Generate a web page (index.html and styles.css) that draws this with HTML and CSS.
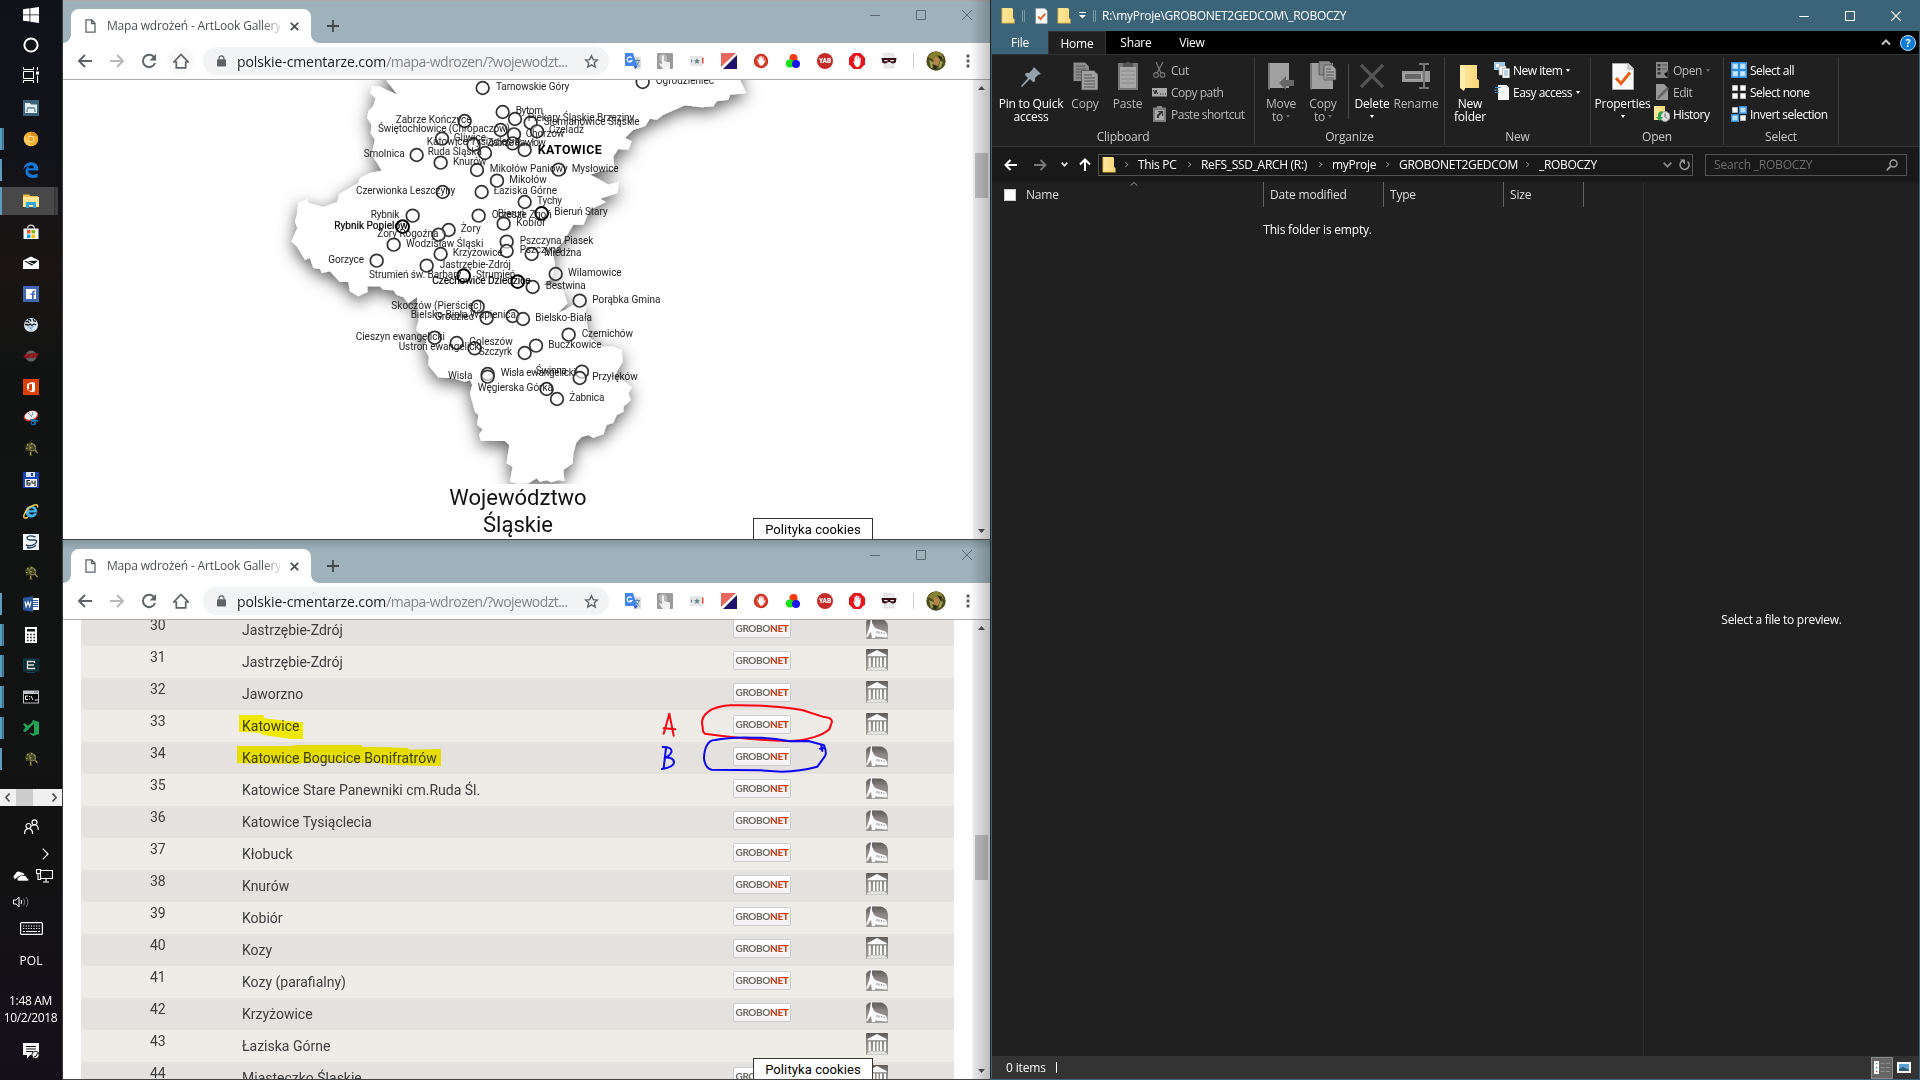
FILE: index.html
```html
<!DOCTYPE html>
<html lang="pl">
<head>
<meta charset="utf-8">
<title>Desktop</title>
<link rel="stylesheet" href="styles.css">
</head>
<body>
<svg class="defs" aria-hidden="true">
  <defs>
    <linearGradient id="gBank" x1="0" y1="0" x2="0" y2="1"><stop offset="0" stop-color="#5e5a57"/><stop offset=".4" stop-color="#8a8784"/><stop offset="1" stop-color="#a5a19c"/></linearGradient>
    <linearGradient id="gFolder" x1="0" y1="0" x2="1" y2="0"><stop offset="0" stop-color="#ffe9a2"/><stop offset="1" stop-color="#f8d775"/></linearGradient>
    <radialGradient id="gRed"><stop offset="0" stop-color="#f7b2a0"/><stop offset=".6" stop-color="#e04a32"/><stop offset="1" stop-color="#c8201a"/></radialGradient>

    <symbol id="back" viewBox="0 0 16 16"><path d="M15 8H2M8 2 2 8l6 6" fill="none" stroke="currentColor" stroke-width="2"/></symbol>
    <symbol id="reload" viewBox="0 0 16 16"><path d="M13.4 4.6A6.2 6.2 0 1 0 14 10" fill="none" stroke="currentColor" stroke-width="2"/><path d="M15 1v6.5H8.500z" fill="currentColor"/></symbol>
    <symbol id="home" viewBox="0 0 16 16"><path d="M.8 9 8 1.500 15.200 9H12.700v5.800H3.300V9z" fill="none" stroke="currentColor" stroke-width="1.700"/></symbol>
    <symbol id="lock" viewBox="0 0 10 13"><rect y="4.500" width="10" height="8" rx="1" fill="currentColor"/><path d="M2.300 5V3.300a2.700 2.500 0 0 1 5.400 0V5" fill="none" stroke="currentColor" stroke-width="1.300"/></symbol>
    <symbol id="star" viewBox="0 0 16 16"><path d="m8 1.800 1.900 4.200 4.500.4-3.400 3 1 4.500L8 11.500l-4 2.400 1-4.500-3.400-3 4.500-.4z" fill="none" stroke="currentColor" stroke-width="1.500"/></symbol>
    <symbol id="page" viewBox="0 0 11 14"><path d="M1 .8h5.800L10 4.200v9H1zM6.500.8v3.700H10" fill="none" stroke="currentColor" stroke-width="1.300"/></symbol>

    <symbol id="xTranslate" viewBox="0 0 16 16"><path d="M6 4h10v12H9z" fill="#dcdcdc"/><path d="M9 7.500h6M12 6v1.500M14 8q-1 4-4 5M10.500 8q1 3 4 5" stroke="#5f86a8" fill="none"/><path d="M0 0h8l4 13H1q-1 0-1-1z" fill="#4285f4"/><path d="M9 13h4l-3 3z" fill="#2a57c4"/><path d="M6.800 5A2.500 2.500 0 1 0 7 7.500H4.800" stroke="#fff" fill="none" stroke-width="1.200"/></symbol>
    <symbol id="xTouch" viewBox="0 0 16 16"><rect width="16" height="16" rx="1" fill="#9b9b9b"/><circle cx="6" cy="5" r="4" fill="#b9b9b9"/><path d="M5 3q1-1.500 2 0v5l6 1.500V16H6l-4-5q0-1.500 3 0z" fill="#f1f1f1"/></symbol>
    <symbol id="xStars" viewBox="0 0 16 16"><path d="M1 3h13v10H1z" fill="#e6e8e8"/><path d="m8 5 .9 2 2.100.2-1.600 1.400.5 2.200L8 9.700l-1.900 1.100.5-2.200L5 7.200 7.100 7zM2 6l1.500 2L2 10z" fill="#65848b"/><path d="M13 4.500h1.500v6H13z" fill="#ef4b43"/></symbol>
    <symbol id="xDiag" viewBox="0 0 16 16"><path d="M0 0h16v16H0z" fill="#fff"/><path d="M0 0h15L0 14z" fill="#ea675f"/><path d="M16 2v14H2z" fill="#20126b"/></symbol>
    <symbol id="xHand" viewBox="0 0 16 16"><circle cx="8" cy="8" r="7.200" fill="url(#gRed)"/><path d="M4.500 5.500 6 8V3.800h1V7l.5-4h1L9 7l.8-3.500.8.2L10.400 8.500 12 7l.6.700-3 4.800H7L4 6z" fill="#fff"/></symbol>
    <symbol id="xRgb" viewBox="0 0 16 16"><circle cx="8.500" cy="5" r="4" fill="#fb3813"/><circle cx="5" cy="10.500" r="4.100" fill="#12e312"/><circle cx="11" cy="11" r="4" fill="#1717e8"/></symbol>
    <symbol id="xYab" viewBox="0 0 16 16"><circle cx="8" cy="8" r="8" fill="#c62c27"/><text x="8" y="10.400" text-anchor="middle" font-family="Roboto" font-weight="900" font-size="6.500" fill="#fff">YAB</text></symbol>
    <symbol id="xStop" viewBox="0 0 16 16"><path d="M4.700 0h6.600L16 4.700v6.600L11.300 16H4.700L0 11.300V4.700z" fill="#e8141c"/><path d="M4 7.500 5.500 9V3.500h1.300V7l.3-4.500h1.300V7l.6-4h1.200v4.500l.6-2.800h1.100L11.500 10q-.5 3.500-2.500 4H7.500Q5.500 13 4 7.500z" fill="#fff"/></symbol>
    <symbol id="xMask" viewBox="0 0 16 16"><path d="M3 0h8l2 2v13H3z" fill="#e9e9e9" stroke="#c7c7c7" stroke-width=".5"/><path d="M.5 5h15l-.7 4.500q-3.800 2-5.800-.5H7q-2 2.500-5.800.5z" fill="#3b0e18"/><path d="M3 7h3.500v1.300H3.500zM9.500 7H13l-.5 1.300h-3z" fill="#fff"/></symbol>
    <symbol id="xAvatar" viewBox="0 0 20 20"><circle cx="10" cy="10" r="9.700" fill="#4d4a1e"/><path d="M2 6q6-8 13-4l3 6-6-2-4 3z" fill="#87822f"/><path d="M8 7q4-3 6 2l-2 6-5-2z" fill="#b5854c"/><path d="M3 9l4 2 1 5-3 1zM14 10l3 1-2 5-3 2z" fill="#9ba04f"/><path d="M11 4l5 2-1 3zM6 13l5 3-2 3z" fill="#26240f"/></symbol>

    <symbol id="bank" viewBox="0 0 22 22"><rect width="22" height="22" rx="1" fill="url(#gBank)"/><path d="M11 1 20.500 6v1.300H1.500V6zM2.500 8.500h2.300V18H2.500zM7 8.500h2V18H7zM10.600 8.500h1.900V18h-1.900zM14 8.500h2V18h-2zM18 8.500h2V18h-2zM2.500 18.500h17v1.300H2.500zM1 20.200h20V21.500H1z" fill="#fafafa"/></symbol>
    <symbol id="church" viewBox="0 0 22 22"><path d="M0 22V5q1-3 4-3.500h11q6 1.500 7 7.500v13z" fill="url(#gBank)"/><path d="M5 1h1v5l3 5 10.500 3.500q2 1 2 6L9 19.500V21H6l-1-6-3.500 5H0l3.500-10z" fill="#fafafa"/><path d="M11 14v2M13 14.500v2M15.500 15v1.500M18 15.500V17" stroke="#8b8885"/><path d="m1 21.500 3-5 1.500 5z" fill="#8f8c89"/></symbol>

    <symbol id="folder" viewBox="0 0 14 17"><path d="M1 1h10l1 1v9l1.500 1v4H1z" fill="url(#gFolder)"/><path d="M1 1v15h12.500" fill="none" stroke="#e3b744"/></symbol>
    <symbol id="chk" viewBox="0 0 13 17"><path d="M.5.500H10L12.500 3v13.500H.5z" fill="#fafafa" stroke="#bbb" stroke-width=".6"/><path d="m3 9 2.500 2.800L10.500 6" fill="none" stroke="#e8581b" stroke-width="1.800"/></symbol>

    <symbol id="tree" viewBox="0 0 16 16"><path d="M4 2.500 8 1l3 1.500 2 3.500-1 4-3 .5L9 14l1.500 1H6l1-1.500-.5-3.500L3 10 2 6z" fill="#45471f"/><path d="M4 3h1.500v1.500H4zM8 2h1.500v1H8zM7 6h1.500v1.500H7zM3 7h1.500v1H3zM11 4h1v1.500h-1zM7 11h1v3H7z" fill="#a4a254"/><circle cx="9.500" cy="6.500" r="3.300" fill="none" stroke="#7d8270" stroke-width=".9"/><path d="m12 9 2.500 3" stroke="#a8903a" stroke-width="1.200"/></symbol>
  </defs>
</svg>

<div class="desktop">
  <nav class="taskbar">
    <div class="sys"><svg width="16" height="16" viewBox="0 0 16 16"><path d="M0 2.200 6.500 1.300v6.200H0zM7.300 1.200 16 0v7.500H7.300zM0 8.300h6.500v6.300L0 13.700zM7.300 8.300H16v7.600l-8.700-1.200z" fill="#fff"/></svg></div>
    <div class="sys"><svg width="16" height="16" viewBox="0 0 16 16"><circle cx="8" cy="8" r="6.600" fill="none" stroke="#fff" stroke-width="2"/></svg></div>
    <div class="sys"><svg width="16" height="16" viewBox="0 0 16 16"><path d="M.5 4.500h10v7H.5zM.5 0v2.500h10V0M.5 16v-2.500h10V16M14.500 0v3M14.500 8.500V16" fill="none" stroke="#fff"/><path d="M13 4.500h3v3h-3z" fill="#fff"/></svg></div>
    <div class="apps">
      <div class="app"><svg width="16" height="16" viewBox="0 0 16 16"><path d="M0 0h16v16H0z" fill="#386278"/><path d="M2 3h5l1 1.500h6V13H2z" fill="#e4edf0"/><path d="M4 7h8l1 5H3z" fill="#7c9dab"/><path d="M5 9h6v3H5z" fill="#e4edf0"/></svg></div>
      <div class="app run many"><svg width="16" height="16" viewBox="0 0 16 16"><circle cx="8" cy="8" r="7.300" fill="#f3b02b"/><path d="M8 .7A7.300 7.300 0 0 1 14.600 5H8z" fill="#d88a1b"/><path d="M1.500 5 5 9.500 8 15A7.300 7.300 0 0 1 1.500 5z" fill="#fbc95d"/><circle cx="8" cy="8" r="3.300" fill="#fff0c8"/><circle cx="8" cy="8" r="2.500" fill="#eca32a"/></svg></div>
      <div class="app run"><svg width="16" height="16" viewBox="0 0 16 16"><path d="M.5 7.500C1 3 4 .3 8.200.3c5 0 7.400 3.500 7.300 8.200H5.300c.2 3.200 2.700 4.300 5 4.300 1.800 0 3.300-.5 4.400-1.200v3.300c-1.400.7-3.100 1.100-5 1.100-4.600 0-7.200-3-7.200-6.500 0-2.800 1.700-4.800 3.800-5.700C3.500 4.200 1.800 5.300.5 7.500zM5.400 6.200h5.500c0-2-1-3-2.600-3S5.600 4.300 5.400 6.200z" fill="#1377d6"/></svg></div>
      <div class="app run active"><svg width="16" height="16" viewBox="0 0 16 16"><path d="M0 1.500h6L7.500 3H15v3H0z" fill="#f0c04e"/><path d="M0 4h16v10H0z" fill="#ffe594"/><path d="M3 15V9h10v6h-3v-3H6v3z" fill="#35a5df"/></svg></div>
      <div class="app"><svg width="16" height="16" viewBox="0 0 16 16"><path d="M.5 4.500h15V15h-15z" fill="#fff"/><path d="M4.500 4.500C5 0 11 0 11.500 4.500" fill="none" stroke="#ddd" stroke-width="1.200"/><path d="M4 6h3.500v3.500H4z" fill="#f25022"/><path d="M8.500 6H12v3.500H8.500z" fill="#7fba00"/><path d="M4 10.500h3.500V14H4z" fill="#00a4ef"/><path d="M8.500 10.500H12V14H8.500z" fill="#ffb900"/></svg></div>
      <div class="app"><svg width="16" height="16" viewBox="0 0 16 16"><path d="M0 5.500 8 1.500l8 4V14H0z" fill="#fff"/><path d="m1 6 14-.2-6 5z" fill="#111"/><path d="m3 5.500 9 4.500" stroke="#fff"/></svg></div>
      <div class="app"><svg width="16" height="16" viewBox="0 0 16 16"><path d="M0 0h16v16H0z" fill="#4267b2"/><path d="M3 3h10v10H3z" fill="#fff"/><path d="M9 13V9H7.500V7.500H9C9 5 10 4.500 12 4.500V6c-1.200 0-1.300.3-1.300 1.500H12L11.800 9h-1.100v4z" fill="#4267b2"/></svg></div>
      <div class="app"><svg width="16" height="16" viewBox="0 0 16 16"><circle cx="8" cy="8" r="7" fill="#dbe6ee"/><path d="M2.500 4.500h2.500l1 1.500M5 2.500h2l1 2M10 2l1 2 2 .5M2 7.500h2l1 1 2-1.500 2 1.500 2-1.500 2 1" fill="none" stroke="#10161c" stroke-width="1.300"/><path d="m5.500 9 2.500 3 2.500-3M8 10v5" stroke="#8fb0ca" fill="none" stroke-width="1.300"/></svg></div>
      <div class="app"><svg width="16" height="16" viewBox="0 0 16 16"><circle cx="8" cy="8" r="5.600" fill="#636363"/><path d="m0 9 3-3.500 3 .5 3-1 3 .5 4-.5-2 4-4 1-3-.5-3 1z" fill="#84141a"/><path d="m2 8.500 3-2M7 9l3-3M11 8.500l3-2" stroke="#b83a3a" stroke-width=".6"/></svg></div>
      <div class="app"><svg width="16" height="16" viewBox="0 0 16 16"><path d="M0 0h16v16H0z" fill="#dc3e00"/><path d="m4 5 5-2 3 .8v8.500l-3 .9-5-2 5 .5V4.800L6 5.500V10l-2 .8z" fill="#fff"/></svg></div>
      <div class="app"><svg width="16" height="16" viewBox="0 0 16 16"><ellipse cx="8" cy="6" rx="7.500" ry="5" transform="rotate(-20 8 6)" fill="#d83a35"/><ellipse cx="8" cy="5.300" rx="6.500" ry="4.100" transform="rotate(-20 8 5.300)" fill="#eef0f2"/><path d="m5 3 4 4M10 2 8.500 7" stroke="#8b949b"/><path d="m7.500 9.500 7.500 1.500M12 10v5" stroke="#1c7cc9" stroke-width="1.500"/><circle cx="10" cy="13" r="1.800" fill="none" stroke="#1c7cc9"/></svg></div>
      <div class="app"><svg width="16" height="16"><use href="#tree"/></svg></div>
      <div class="app"><svg width="16" height="16" viewBox="0 0 16 16"><path d="M0 0h16v16H0z" fill="#1842b8"/><path d="M3 0h9v5H3z" fill="#d4e2ee"/><path d="M8 1h2v3H8z" fill="#1842b8"/><path d="M2 7h12v8H2z" fill="#f4f4f4"/><path d="M7 8.500H4V13h3v-2H4M9 8.500V11h3M12 8.500V14" fill="none" stroke="#222" stroke-width="1.100"/></svg></div>
      <div class="app"><svg width="16" height="16" viewBox="0 0 16 16"><path d="M14.200 9.500H5.800c.3 2 4.300 2.900 5.200.8h3c-1 3-3.400 4.500-6 4.300-3.200-.2-5.500-2.700-5.400-6.100.1-3.300 2.500-5.800 5.700-5.800 3.700.1 6.200 2.700 5.900 6.800zM5.900 7.300h5c-.3-2.700-4.600-2.700-5 0z" fill="#46b2ea"/><path d="M14.500 4.500Q15.500.5 10 2.500 3.500 5 1 12q-1.200 4.500 4 2.200" fill="none" stroke="#f4c64a" stroke-width="1.500"/></svg></div>
      <div class="app"><svg width="16" height="16" viewBox="0 0 16 16"><path d="M0 0h16v16H0z" fill="#f3f6f9"/><path d="M12.500 3Q6 .5 4 3.500 4 6.500 10 6t2 4q-5 3-9 1M4 13.500q4 1.500 9-2" fill="none" stroke="#24425e" stroke-width="1.400"/></svg></div>
      <div class="app"><svg width="16" height="16"><use href="#tree"/></svg></div>
      <div class="app run"><svg width="16" height="16" viewBox="0 0 16 16"><path d="M9 2h7v12H9z" fill="#fff"/><path d="M10 4.500h5M10 6.500h5M10 8.500h5M10 10.500h5" stroke="#2a5699"/><path d="m0 2 10-2v16L0 14z" fill="#2a5699"/><path d="m2 5.500 1.200 5L5 6l1.700 4.500L8 5.300" fill="none" stroke="#fff" stroke-width="1.200"/></svg></div>
      <div class="app run many"><svg width="16" height="16" viewBox="0 0 16 16"><path d="M2 0h12v16H2z" fill="#fff"/><path d="M4 2h8v2.500H4z" fill="#111"/><path d="M4 7.500h8M4 10.500h8M4 13.500h8" stroke="#111" stroke-width="1.500" stroke-dasharray="1.500 1.700"/></svg></div>
      <div class="app run many"><svg width="16" height="16" viewBox="0 0 16 16"><rect y="1" width="16" height="12" rx="1" fill="#052b38" stroke="#1a5260" stroke-width=".7"/><path d="M11.500 9.500v1h-7v-7h7v1.500M5 7h6" fill="none" stroke="#e3dcd0" stroke-width="1.300"/><path d="M4 14.500h8" stroke="#124a55"/></svg></div>
      <div class="app run many"><svg width="16" height="16" viewBox="0 0 16 16"><path d="M0 1.500h16v13H0z" fill="#c3c3cb"/><path d="M1 5h14v8.500H1z" fill="#000"/><path d="M11 3h4" stroke="#555" stroke-dasharray="1 .5"/><path d="M5 7H2.500v3.500H5M6.500 7v1M6.500 9.500v1M8 7l2 4M12 11h3" fill="none" stroke="#fff"/></svg></div>
      <div class="app run many"><svg width="16" height="16" viewBox="0 0 16 16"><path d="m10 0 6 2v12l-6 2-4-3 5 .5V3.500L5 9.800 2 12l-2-1 2.500-3.500L0 4l2-.8 3 2.600 4-3.300z" fill="#23a455"/></svg></div>
      <div class="app run"><svg width="16" height="16"><use href="#tree"/></svg></div>
    </div>
    <div class="dockscroll">
      <svg width="5" height="9" viewBox="0 0 5 9"><path d="M4.500.5.8 4.500l3.700 4" fill="none" stroke="#505050" stroke-width="1.600"/></svg>
      <i></i>
      <svg width="5" height="9" viewBox="0 0 5 9"><path d="m.5.500 3.700 4-3.700 4" fill="none" stroke="#505050" stroke-width="1.600"/></svg>
    </div>
    <div class="tray">
      <div class="people"><svg width="15" height="15" viewBox="0 0 15 15"><g fill="none" stroke="#fff" stroke-width="1.200"><circle cx="10.500" cy="3.300" r="2.500"/><circle cx="4.500" cy="7" r="2.500"/><path d="M.6 15q0-5.300 4-5.300t4 5.300M7.500 7.200q3-3 5.500-.5 1.200 1.500 1.400 4"/></g></svg></div>
      <div class="more"><svg width="7" height="12" viewBox="0 0 7 12"><path d="m.7.700 5.300 5.300-5.300 5.300" fill="none" stroke="#fff" stroke-width="1.200"/></svg></div>
      <div class="net"><svg width="16" height="11" viewBox="0 0 16 11"><path d="M2 8Q-1 6 2 3.500 4-1 8 1.500q3-.5 3.500 2.500L6 5z" fill="#fff"/><path d="M5 10q-2.500-3 1-4 1.500-3 5-1.500 3 0 3 2.500 3 1 1 3z" fill="#fff" stroke="#111" stroke-width=".6"/></svg>
        <svg width="17" height="14" viewBox="0 0 17 14"><path d="M4.500 1.500h12v8h-12zM7 13h6M10 10v3M2 5v5.500h3M.5.500h4v4h-4z" fill="none" stroke="#fff" stroke-width="1.100"/></svg></div>
      <div class="vol"><svg width="17" height="12" viewBox="0 0 17 12"><path d="M.5 4h2.700L6 1v10L3.200 8H.5z" fill="none" stroke="#fff"/><path d="M8 4q1.500 2 0 4" fill="none" stroke="#fff"/><path d="M10.500 2.500q2.500 3.500 0 7M13 1q4 5 0 10" fill="none" stroke="#777"/></svg></div>
      <div class="kbd"><svg width="23" height="13" viewBox="0 0 23 13"><rect x=".6" y=".6" width="21.800" height="11.800" rx="1" fill="none" stroke="#fff" stroke-width="1.200"/><path d="M3 4h17M3 6.500h17" stroke="#fff" stroke-dasharray="1.200 1.400"/><path d="M3 9.500h2M6 9.500h11M18 9.500h2" stroke="#fff"/></svg></div>
      <div class="lang">POL</div>
      <div class="clock"><span>1:48 AM</span><span>10/2/2018</span></div>
      <div class="note"><svg width="17" height="17" viewBox="0 0 17 17"><path d="M0 0h16v12H7l-3 3.500V12H0z" fill="#fff"/><path d="M3 3.500h10M3 6h10M3 8.500h7" stroke="#111"/><circle cx="12.500" cy="12" r="3.700" fill="#fff" stroke="#111"/><path d="M11 14q3 0 3.500-4" stroke="#111" fill="none"/></svg></div>
    </div>
  </nav>

  <main class="browsers">
    <section class="window">
      <header class="titlebar">
        <div class="tab"><svg class="doc" width="11" height="14"><use href="#page"/></svg><span class="tabname">Mapa wdrożeń - ArtLook Gallery</span><svg width="9" height="9" viewBox="0 0 9 9"><path d="m.8.800 7.400 7.400M8.200.8.800 8.200" stroke="#494c50" stroke-width="1.700"/></svg></div>
        <svg class="plus" width="12" height="12" viewBox="0 0 12 12"><path d="M6 0v12M0 6h12" stroke="#3f4548" stroke-width="1.800"/></svg>
        <div class="winctl"><svg width="10" height="10" viewBox="0 0 10 10"><path d="M0 5.500h10" stroke="#5d6b71"/></svg><svg width="10" height="10" viewBox="0 0 10 10"><path d="M.5.500h9v9h-9z" fill="none" stroke="#5d6b71"/></svg><svg width="10" height="10" viewBox="0 0 10 10"><path d="m0 0 10 10M10 0 0 10" stroke="#5d6b71"/></svg></div>
      </header>
      <div class="toolbar">
        <div class="nav"><svg width="16" height="16"><use href="#back"/></svg><svg class="off flip" width="16" height="16"><use href="#back"/></svg><svg width="16" height="16"><use href="#reload"/></svg><span class="homebg"><svg width="16" height="16"><use href="#home"/></svg></span></div>
        <div class="omnibox"><svg width="9" height="12"><use href="#lock"/></svg><span class="url">polskie-cmentarze.com<em>/mapa-wdrozen/?wojewodzt...</em></span><svg width="15" height="15"><use href="#star"/></svg></div>
        <div class="ext"><svg><use href="#xTranslate"/></svg><svg><use href="#xTouch"/></svg><svg><use href="#xStars"/></svg><svg><use href="#xDiag"/></svg><svg><use href="#xHand"/></svg><svg><use href="#xRgb"/></svg><svg><use href="#xYab"/></svg><svg><use href="#xStop"/></svg><svg><use href="#xMask"/></svg></div>
        <i class="sep"></i>
        <svg class="avatar" width="20" height="20"><use href="#xAvatar"/></svg>
        <svg width="4" height="14" viewBox="0 0 4 14"><path d="M.6.600h2.800v2.800H.6zM.6 5.600h2.800v2.800H.6zM.6 10.600h2.800v2.800H.6z" fill="#56595d"/></svg>
      </div>
      <div class="view">
        <div class="page mappage">
          <svg class="map" width="910" height="404" viewBox="63 80 910 404">
            <defs><filter id="sh" x="-20%" y="-20%" width="140%" height="140%"><feDropShadow dx="0" dy="15" stdDeviation="24" flood-color="#000" flood-opacity=".62"/></filter></defs>
            <g transform="translate(280 78) scale(.33333)">
              <path filter="url(#sh)" fill="#fff" d="M320-60V8L353 50 325 38 300 26 275 25 272 45 287 60 280 85 265 100 262 120 275 140 272 165 285 185 275 230 295 260 305 278 270 285 240 300 235 315 178 348 172 372 130 387 85 375 83 364 55 375 50 415 45 430 52 450 35 490 50 505 75 545 90 540 100 570 120 572 125 585 150 580 180 612 205 612 210 640 235 655 262 642 262 625 300 625 310 635 340 637 350 650 370 658 385 675 411 657 413 700 416 726 408 756 440 786 430 806 447 836 445 861 475 898 520 901 555 911 570 906 577 921 570 946 585 1001 595 1011 592 1041 608 1054 597 1071 603 1088 675 1089 688 1101 680 1156 698 1166 690 1211 715 1218 745 1216 770 1201 780 1211 800 1207 815 1213 835 1206 853 1209 850 1176 878 1156 880 1126 888 1096 903 1078 925 1071 940 1079 970 1069 980 1041 1000 1034 1010 1011 1030 1001 1030 986 1052 966 1045 946 1055 928 1020 901 1003 906 1010 881 1028 851 1025 816 1000 806 965 806 930 781 922 746 915 681 880 681 855 696 835 704 862 675 850 640 815 620 790 622 815 600 825 560 818 522 850 490 880 440 910 440 930 395 977 372 960 362 1012 345 1017 311 985 320 950 300 930 290 960 280 1003 272 1000 235 1015 213 1045 215 1055 190 1035 180 1060 155 1095 145 1110 122 1130 125 1150 110 1215 82 1265 88 1300 85 1310 70 1345 65 1350 50 1398 45 1380 5V-60Z"/>
              <g class="rings">
                <circle cx="608" cy="30" r="19"/><circle cx="1088" cy="12" r="19"/><circle cx="668" cy="102" r="19"/><circle cx="705" cy="123" r="19"/><circle cx="752" cy="134" r="19"/><circle cx="771" cy="160" r="19"/><circle cx="554" cy="129" r="19"/><circle cx="662" cy="156" r="19"/><circle cx="702" cy="169" r="19"/><circle cx="486" cy="182" r="19"/><circle cx="581" cy="200" r="19"/><circle cx="698" cy="196" r="19"/><circle cx="734" cy="216" r="19"/><circle cx="410" cy="231" r="19"/><circle cx="615" cy="225" r="19"/><circle cx="482" cy="254" r="19"/><circle cx="591" cy="276" r="19"/><circle cx="836" cy="275" r="19"/><circle cx="651" cy="308" r="19"/><circle cx="488" cy="342" r="19"/><circle cx="605" cy="342" r="19"/><circle cx="734" cy="372" r="19"/><circle class="k" cx="785" cy="406" r="19"/><circle cx="398" cy="413" r="19"/><circle class="k" cx="368" cy="446" r="19"/><circle cx="596" cy="413" r="19"/><circle cx="671" cy="437" r="19"/><circle cx="506" cy="456" r="19"/><circle cx="476" cy="470" r="19"/><circle cx="341" cy="500" r="19"/><circle cx="680" cy="491" r="19"/><circle cx="680" cy="519" r="19"/><circle cx="482" cy="528" r="19"/><circle cx="755" cy="528" r="19"/><circle cx="290" cy="548" r="19"/><circle cx="440" cy="563" r="19"/><circle class="k" cx="551" cy="593" r="19"/><circle class="k" cx="713" cy="611" r="19"/><circle cx="758" cy="627" r="19"/><circle cx="827" cy="588" r="19"/><circle cx="899" cy="668" r="19"/><circle cx="593" cy="686" r="19"/><circle cx="620" cy="720" r="19"/><circle cx="698" cy="714" r="19"/><circle cx="729" cy="723" r="19"/><circle cx="866" cy="770" r="19"/><circle cx="464" cy="779" r="19"/><circle cx="530" cy="795" r="19"/><circle cx="584" cy="811" r="19"/><circle cx="768" cy="803" r="19"/><circle cx="734" cy="825" r="19"/><circle cx="623" cy="888" r="19"/><circle cx="623" cy="896" r="19"/><circle cx="906" cy="881" r="19"/><circle cx="899" cy="900" r="19"/><circle cx="800" cy="933" r="19"/><circle cx="831" cy="963" r="19"/>
              </g>
              <g class="labels">
                <text x="648" y="36" textLength="220">Tarnowskie Góry</text><text x="1127" y="18" textLength="175">Ogrodzieniec</text><text x="707" y="108" textLength="82">Bytom</text><text x="743" y="129" textLength="320">Piekary Śląskie Brzeziny</text><text x="791" y="141" textLength="288">Siemianowice Śląskie</text><text x="807" y="165" textLength="105">Czeladź</text><text x="347" y="135" textLength="228">Zabrze Kończyce</text><text x="294" y="162" textLength="396">Świętochłowice (Chropaczów)</text><text x="737" y="177" textLength="116">Chorzów</text><text x="521" y="188" textLength="97">Gliwice</text><text x="440" y="200" textLength="280">Katowice Tysiąclecia</text><text x="622" y="204" textLength="175">Zabrze Pawłów</text><text x="251" y="237" textLength="123">Smolnica</text><text x="443" y="231" textLength="163">Ruda Śląska</text><text x="519" y="261" textLength="100">Knurów</text><text x="629" y="282" textLength="234">Mikołów Paniowy</text><text x="875" y="282" textLength="141">Mysłowice</text><text x="688" y="314" textLength="112">Mikołów</text><text x="228" y="348" textLength="298">Czerwionka Leszczyny</text><text x="641" y="348" textLength="190">Łaziska Górne</text><text x="771" y="378" textLength="75">Tychy</text><text x="823" y="411" textLength="160">Bieruń Stary</text><text x="272" y="420" textLength="86">Rybnik</text><text x="635" y="420" textLength="180">Orzesze Zgoń</text><text x="653" y="417" textLength="82">Bieruń</text><text x="709" y="444" textLength="88">Kobiór</text><text class="h" x="163" y="453" textLength="220">Rybnik Popielów</text><text x="542" y="462" textLength="60">Żory</text><text x="292" y="477" textLength="183">Żory Rogoźna</text><text x="378" y="506" textLength="232">Wodzisław Śląski</text><text x="719" y="498" textLength="221">Pszczyna Piasek</text><text x="719" y="524" textLength="125">Pszczyna</text><text x="792" y="534" textLength="112">Miedźna</text><text x="518" y="534" textLength="150">Krzyżowice</text><text x="145" y="555" textLength="107">Gorzyce</text><text x="479" y="570" textLength="214">Jastrzębie-Zdrój</text><text x="267" y="600" textLength="277">Strumień św. Barbary</text><text x="588" y="600" textLength="118">Strumień</text><text class="h" x="457" y="617" textLength="295">Czechowice Dziedzice</text><text x="864" y="594" textLength="161">Wilamowice</text><text x="797" y="633" textLength="120">Bestwina</text><text x="937" y="675" textLength="204">Porąbka Gmina</text><text x="334" y="692" textLength="272">Skoczów (Pierściec)</text><text x="392" y="720" textLength="316">Bielsko-Biała Wapienica</text><text x="465" y="725" textLength="117">Grodziec</text><text x="766" y="729" textLength="170">Bielsko-Biała</text><text x="905" y="777" textLength="154">Czernichów</text><text x="227" y="786" textLength="268">Cieszyn ewangelicki</text><text x="568" y="801" textLength="130">Goleszów</text><text x="356" y="816" textLength="250">Ustroń ewangelicki</text><text x="805" y="810" textLength="160">Buczkowice</text><text x="596" y="832" textLength="100">Szczyrk</text><text x="504" y="903" textLength="73">Wisła</text><text x="662" y="893" textLength="226">Wisła ewangelicki</text><text x="767" y="887" textLength="94">Świnna</text><text x="937" y="906" textLength="136">Przyłęków</text><text x="593" y="939" textLength="226">Węgierska Górka</text><text x="868" y="969" textLength="105">Żabnica</text>
                <text class="cap" x="773" y="227" textLength="192">KATOWICE</text>
              </g>
            </g>
          </svg>
          <h1>Województwo<br>Śląskie</h1>
          <div class="cookies">Polityka cookies</div>
        </div>
        <div class="vscroll"><svg width="7" height="4" viewBox="0 0 7 4"><path d="M0 4 3.500 0 7 4z" fill="#505050"/></svg><i class="thumb t1"></i><svg class="dn" width="7" height="4" viewBox="0 0 7 4"><path d="M0 0 3.500 4 7 0z" fill="#505050"/></svg></div>
      </div>
    </section>

    <section class="window second">
      <header class="titlebar">
        <div class="tab"><svg class="doc" width="11" height="14"><use href="#page"/></svg><span class="tabname">Mapa wdrożeń - ArtLook Gallery</span><svg width="9" height="9" viewBox="0 0 9 9"><path d="m.8.800 7.400 7.400M8.200.8.800 8.200" stroke="#494c50" stroke-width="1.700"/></svg></div>
        <svg class="plus" width="12" height="12" viewBox="0 0 12 12"><path d="M6 0v12M0 6h12" stroke="#3f4548" stroke-width="1.800"/></svg>
        <div class="winctl"><svg width="10" height="10" viewBox="0 0 10 10"><path d="M0 5.500h10" stroke="#5d6b71"/></svg><svg width="10" height="10" viewBox="0 0 10 10"><path d="M.5.500h9v9h-9z" fill="none" stroke="#5d6b71"/></svg><svg width="10" height="10" viewBox="0 0 10 10"><path d="m0 0 10 10M10 0 0 10" stroke="#5d6b71"/></svg></div>
      </header>
      <div class="toolbar">
        <div class="nav"><svg width="16" height="16"><use href="#back"/></svg><svg class="off flip" width="16" height="16"><use href="#back"/></svg><svg width="16" height="16"><use href="#reload"/></svg><span class="homebg"><svg width="16" height="16"><use href="#home"/></svg></span></div>
        <div class="omnibox"><svg width="9" height="12"><use href="#lock"/></svg><span class="url">polskie-cmentarze.com<em>/mapa-wdrozen/?wojewodzt...</em></span><svg width="15" height="15"><use href="#star"/></svg></div>
        <div class="ext"><svg><use href="#xTranslate"/></svg><svg><use href="#xTouch"/></svg><svg><use href="#xStars"/></svg><svg><use href="#xDiag"/></svg><svg><use href="#xHand"/></svg><svg><use href="#xRgb"/></svg><svg><use href="#xYab"/></svg><svg><use href="#xStop"/></svg><svg><use href="#xMask"/></svg></div>
        <i class="sep"></i>
        <svg class="avatar" width="20" height="20"><use href="#xAvatar"/></svg>
        <svg width="4" height="14" viewBox="0 0 4 14"><path d="M.6.600h2.800v2.800H.6zM.6 5.600h2.800v2.800H.6zM.6 10.600h2.800v2.800H.6z" fill="#56595d"/></svg>
      </div>
      <div class="view">
        <div class="page">
          <div class="table">
            <div class="row"><span class="num">30</span><span class="name">Jastrzębie-Zdrój</span><span class="grob">GROBO<b>NET</b></span><svg><use href="#church"/></svg></div>
            <div class="row"><span class="num">31</span><span class="name">Jastrzębie-Zdrój</span><span class="grob">GROBO<b>NET</b></span><svg><use href="#bank"/></svg></div>
            <div class="row"><span class="num">32</span><span class="name">Jaworzno</span><span class="grob">GROBO<b>NET</b></span><svg><use href="#bank"/></svg></div>
            <div class="row"><span class="num">33</span><span class="name">Katowice</span><span class="grob">GROBO<b>NET</b></span><svg><use href="#bank"/></svg></div>
            <div class="row"><span class="num">34</span><span class="name">Katowice Bogucice Bonifratrów</span><span class="grob">GROBO<b>NET</b></span><svg><use href="#church"/></svg></div>
            <div class="row"><span class="num">35</span><span class="name">Katowice Stare Panewniki cm.Ruda Śl.</span><span class="grob">GROBO<b>NET</b></span><svg><use href="#church"/></svg></div>
            <div class="row"><span class="num">36</span><span class="name">Katowice Tysiąclecia</span><span class="grob">GROBO<b>NET</b></span><svg><use href="#church"/></svg></div>
            <div class="row"><span class="num">37</span><span class="name">Kłobuck</span><span class="grob">GROBO<b>NET</b></span><svg><use href="#church"/></svg></div>
            <div class="row"><span class="num">38</span><span class="name">Knurów</span><span class="grob">GROBO<b>NET</b></span><svg><use href="#bank"/></svg></div>
            <div class="row"><span class="num">39</span><span class="name">Kobiór</span><span class="grob">GROBO<b>NET</b></span><svg><use href="#church"/></svg></div>
            <div class="row"><span class="num">40</span><span class="name">Kozy</span><span class="grob">GROBO<b>NET</b></span><svg><use href="#bank"/></svg></div>
            <div class="row"><span class="num">41</span><span class="name">Kozy (parafialny)</span><span class="grob">GROBO<b>NET</b></span><svg><use href="#church"/></svg></div>
            <div class="row"><span class="num">42</span><span class="name">Krzyżowice</span><span class="grob">GROBO<b>NET</b></span><svg><use href="#church"/></svg></div>
            <div class="row"><span class="num">43</span><span class="name">Łaziska Górne</span><span></span><svg><use href="#bank"/></svg></div>
            <div class="row"><span class="num">44</span><span class="name">Miasteczko Śląskie</span><span class="grob">GROBO<b>NET</b></span><svg><use href="#bank"/></svg></div>
          </div>
          <svg class="marks hl" viewBox="63 620 910 459"><g transform="translate(60 530) scale(.33333)" fill="#fffb00"><path d="M537 555h73l2 10 68 8 49 4v50l-39-1-80-11-10-7-63-3zM531 648h169l2-3h203l2 5 78 2 60 2 2 5 96-2v51l-113-2-45-2-35-6H725l-5 4-189-2z"/></g></svg>
          <svg class="marks" viewBox="63 620 910 459"><g transform="translate(620 600) scale(.33333)" fill="none" stroke-width="6" stroke-linecap="round" stroke-linejoin="round"><path stroke="#fb0510" d="M131 401 148 341 161 407M131 385l35 3M248 381C238 345 270 320 330 316 400 314 500 320 546 330L608 350Q636 352 636 365L628 388C610 405 560 424 500 423 430 421 320 410 255 401Q248 397 248 381"/><path stroke="#0a06f5" d="M128 441q30 0 26 15-4 12-20 17 28-2 28 15-2 14-36 19M138 444l-7 60M252 476C252 448 262 420 285 420 320 413 350 411 400 413 450 412 480 418 510 424L565 423 612 436Q622 460 614 470L592 500Q540 514 486 515L420 511 275 509Q256 505 252 476M600 446l14-2M604 437l3 16"/></g></svg>
          <div class="cookies">Polityka cookies</div>
        </div>
        <div class="vscroll"><svg width="7" height="4" viewBox="0 0 7 4"><path d="M0 4 3.500 0 7 4z" fill="#505050"/></svg><i class="thumb t2"></i><svg class="dn" width="7" height="4" viewBox="0 0 7 4"><path d="M0 0 3.500 4 7 0z" fill="#505050"/></svg></div>
      </div>
    </section>
  </main>

  <aside class="explorer">
    <header class="xtitle">
      <svg width="14" height="17"><use href="#folder"/></svg><i class="bar"></i>
      <svg class="q1" width="13" height="16"><use href="#chk"/></svg><svg class="q2" width="14" height="17"><use href="#folder"/></svg>
      <svg class="q3" width="7" height="7" viewBox="0 0 7 7"><path d="M0 .5h7" stroke="#fff"/><path d="M0 3h7L3.500 6.500z" fill="#fff"/></svg><i class="bar"></i>
      <span class="path">R:\myProje\GROBONET2GEDCOM\_ROBOCZY</span>
      <div class="xctl"><svg width="10" height="10" viewBox="0 0 10 10"><path d="M0 5.500h10" stroke="#fff"/></svg><svg width="10" height="10" viewBox="0 0 10 10"><path d="M.5.500h9v9h-9z" fill="none" stroke="#fff"/></svg><svg width="10" height="10" viewBox="0 0 10 10"><path d="m0 0 10 10M10 0 0 10" stroke="#fff" stroke-width="1.200"/></svg></div>
    </header>
    <div class="xtabs"><span class="file">File</span><span class="on">Home</span><span class="sh">Share</span><span class="vw">View</span><svg class="fold" width="10" height="7" viewBox="0 0 10 7"><path d="m1 5.500 4-4 4 4" fill="none" stroke="#c4c4c4" stroke-width="2"/></svg><b class="help">?</b></div>
    <div class="ribbon">
      <div class="group g1">
        <div class="tools">
          <div class="big w78"><svg width="22" height="30" viewBox="0 0 22 30"><path d="m14 6 7 7-3 1-3 3q1 4-2 4l-3-3-8 8-1-1 7-8-3-3q0-3 4-2l3-3z" fill="#93a2ac"/></svg><span>Pin to Quick<br>access</span></div>
          <div class="big w30 dim"><svg width="25" height="30" viewBox="0 0 25 30"><path d="M.5 1.500H12l4 4V20H.5z" fill="#8e8e8e"/><path d="M3 5h9M3 8h10M3 11h10M3 14h10M3 17h10" stroke="#555"/><path d="M8.500 9.500H21l4 4V29H8.500z" fill="#a0a0a0" stroke="#444" stroke-width=".7"/><path d="M11 14h8M11 17h11M11 20h11M11 23h11M11 26h11" stroke="#555"/></svg><span>Copy</span></div>
          <div class="big w55 dim"><svg width="22" height="30" viewBox="0 0 22 30"><path d="M1 2h20v27H1z" fill="#777"/><path d="M3 6h16v21H3z" fill="#a8a8a8"/><path d="M6 2h3q2-3 4 0h3v4H6z" fill="#555"/><path d="M4 10h14M4 14h14M4 18h14M4 22h14" stroke="#888"/></svg><span>Paste</span></div>
          <div class="list l1 dim">
            <div><svg width="15" height="16" viewBox="0 0 15 16"><path d="m4 0 5 11M11 0 5 11" stroke="#777" stroke-width="1.300"/><circle cx="4" cy="13" r="2.300" fill="none" stroke="#777" stroke-width="1.200"/><circle cx="10.500" cy="13" r="2.300" fill="none" stroke="#777" stroke-width="1.200"/></svg>Cut</div>
            <div><svg width="15" height="16" viewBox="0 0 15 16"><path d="M0 4h15v8.500H0z" fill="#aaa"/><path d="m1.500 6 1.500 4L4 6l1.500 4M8 10h1M10.500 10h1M13 10h1" stroke="#222" fill="none"/></svg>Copy path</div>
            <div><svg width="15" height="16" viewBox="0 0 15 16"><path d="M1 1.500h13V16H1z" fill="#7c7c7c"/><path d="M3 4h9v10H3z" fill="#aaa"/><path d="M5 0h5v3H5z" fill="#888"/><path d="M5 12V9l3-3H6V5h5v5h-1V7l-3 3v2z" fill="#333"/></svg>Paste shortcut</div>
          </div>
        </div><div class="glabel">Clipboard</div>
      </div>
      <div class="group g2">
        <div class="tools">
          <div class="big w52 dim"><svg width="27" height="30" viewBox="0 0 27 30"><path d="M0 2h21v25H0z" fill="#a0a0a0"/><path d="M0 2h2v27l-2-1z" fill="#777"/><path d="M11 22l7-7v4h8v6h-8v4z" fill="#666"/></svg><span>Move<br>to <u></u></span></div>
          <div class="big w32 dim"><svg width="27" height="30" viewBox="0 0 27 30"><path d="M0 2h23v26H0z" fill="#a0a0a0"/><path d="M0 2h2v27l-2-1z" fill="#777"/><path d="M9 0h10l3 3v11H9z" fill="#8a8a8a" stroke="#444" stroke-width=".7"/><path d="M14 4h8l4 4v11H14z" fill="#a5a5a5" stroke="#444" stroke-width=".7"/><path d="M16 8h5M16 11h8M16 14h8M16 17h8" stroke="#555"/></svg><span>Copy<br>to <u></u></span></div>
          <i class="mini"></i>
          <div class="big w46"><svg width="24" height="30" viewBox="0 0 24 30"><path d="m1 4 22 22M23 4 1 26" stroke="#555" stroke-width="3.200"/></svg><span>Delete<br><u></u></span></div>
          <div class="big w42 dim"><svg width="28" height="30" viewBox="0 0 28 30"><path d="M0 10h28v11H0z" fill="#999"/><path d="M2.500 12.500h17v6h-17z" fill="#666" stroke="#bbb" stroke-width=".7"/><path d="M22 3v24M17 3h4q1 0 1 2 0-2 1-2h4M17 27h4q1 0 1-2 0 2 1 2h4" stroke="#777" fill="none" stroke-width="2"/></svg><span>Rename</span></div>
        </div><div class="glabel">Organize</div>
      </div>
      <div class="group g3">
        <div class="tools">
          <div class="big w50"><svg width="20" height="30" viewBox="0 0 20 30"><path d="M0 4h17v14l2 1v8H4v3l-4-3z" fill="url(#gFolder)"/><path d="M0 4 5 8v21l-5-3z" fill="#ffedb0"/></svg><span>New<br>folder</span></div>
          <div class="list l3">
            <div><svg width="16" height="16" viewBox="0 0 16 16"><path d="M0 0h11v8H0z" fill="#9ecbe4"/><path d="M2 2h3v3H2z" fill="#fff"/><path d="M5 4h7v9H5z" fill="#f5f5f5" stroke="#999" stroke-width=".6"/><path d="M8.500 6.500h7V16h-7z" fill="#fff" stroke="#999" stroke-width=".6"/><path d="M10 9h4M10 11h4M10 13h4" stroke="#7aa8cc"/></svg>New item <u></u></div>
            <div><svg width="16" height="16" viewBox="0 0 16 16"><path d="M4 1h8.500L15 3.500V16H4z" fill="#f5f5f5"/><path d="M1 3.500h6M0 6h5M1 8.500h4" stroke="#4a90c8"/></svg>Easy access <u></u></div>
          </div>
        </div><div class="glabel">New</div>
      </div>
      <div class="group g4">
        <div class="tools">
          <div class="big w62"><svg width="22" height="30" viewBox="0 0 22 30"><path d="M.5 2.500h16l5 5v21H.5z" fill="#fafafa" stroke="#aaa"/><path d="M16 2.500V8h5.500" fill="#ddd" stroke="#aaa"/><path d="m4 17 5 5.500 9-11" fill="none" stroke="#e95f16" stroke-width="3"/></svg><span>Properties<br><u></u></span></div>
          <div class="list l4">
            <div class="dim"><svg width="16" height="16" viewBox="0 0 16 16"><path d="M2 0h12v16H2z" fill="#8a8a8a"/><path d="M3.500 2h3v2.500h-3zM3.500 6h3v2.500h-3zM3.500 10h3v2.500h-3z" fill="#333"/><path d="M8 3h5M8 7h5M10 12l4-3v7" stroke="#555"/></svg>Open <u></u></div>
            <div class="dim"><svg width="16" height="16" viewBox="0 0 16 16"><path d="M2 0h8l4 4v12H2z" fill="#999"/><path d="M3 15l1-3 9-9 2 2-9 9z" fill="#666"/></svg>Edit</div>
            <div><svg width="16" height="16" viewBox="0 0 16 16"><path d="M0 0h11v14H0z" fill="url(#gFolder)"/><circle cx="11" cy="10.500" r="5" fill="#ddd" stroke="#999"/><path d="M11 7.500v3l2 2" stroke="#555" fill="none"/><path d="M8 5Q3 6 4 11H2l3.500 4L9 11H7q-.5-3 2-4z" fill="#2da44e"/></svg>History</div>
          </div>
        </div><div class="glabel">Open</div>
      </div>
      <div class="group g5">
        <div class="tools">
          <div class="list l5">
            <div><svg width="16" height="16" viewBox="0 0 16 16"><path d="M.7.700h14.600v14.600H.7z" fill="#9bd1fb" stroke="#2e8ee0" stroke-width="1.400"/><path d="M8 0v16M0 8h16" stroke="#2e8ee0" stroke-width="2"/><path d="M2.500 2.500H6V6H2.500zM10 2.500h3.500V6H10zM2.500 10H6v3.500H2.500zM10 10h3.500v3.500H10z" fill="#cfe9ff"/></svg>Select all</div>
            <div><svg width="16" height="16" viewBox="0 0 16 16"><path d="M1.500 1.500h5v5h-5zM9.500 1.500h5v5h-5zM1.500 9.500h5v5h-5zM9.500 9.500h5v5h-5z" fill="#fff" stroke="#bbb"/></svg>Select none</div>
            <div><svg width="16" height="16" viewBox="0 0 16 16"><path d="M1.500 1.500h5v5h-5zM9.500 9.500h5v5h-5z" fill="#fff" stroke="#bbb"/><path d="M8.700.700h6.600v6.600H8.700zM.7 8.700h6.600v6.600H.7z" fill="#b8dffc" stroke="#2e8ee0" stroke-width="1.400"/></svg>Invert selection</div>
          </div>
        </div><div class="glabel">Select</div>
      </div>
    </div>
    <div class="addr">
      <svg class="a1" width="13" height="12" viewBox="0 0 13 12"><path d="M13 6H2M6.500 1 1.500 6l5 5" fill="none" stroke="#fff" stroke-width="2"/></svg>
      <svg class="a2" width="13" height="12" viewBox="0 0 13 12"><path d="M0 6h11M6.500 1l5 5-5 5" fill="none" stroke="#777" stroke-width="2"/></svg>
      <svg class="a3" width="7" height="5" viewBox="0 0 7 5"><path d="m.7.700 2.800 3 2.800-3" fill="none" stroke="#ddd" stroke-width="1.700"/></svg>
      <svg class="a4" width="12" height="13" viewBox="0 0 12 13"><path d="M6 13V2M1 6.500l5-5 5 5" fill="none" stroke="#fff" stroke-width="2"/></svg>
      <div class="crumbs"><svg width="14" height="17"><use href="#folder"/></svg><i></i><span class="c1">This PC</span><i></i><span class="c2">ReFS_SSD_ARCH (R:)</span><i></i><span class="c3">myProje</span><i></i><span class="c4">GROBONET2GEDCOM</span><i></i><span class="c5">_ROBOCZY</span>
        <svg class="drop" width="9" height="6" viewBox="0 0 9 6"><path d="m.7.700 3.800 4 3.800-4" fill="none" stroke="#888" stroke-width="1.800"/></svg>
        <svg class="ref" width="11" height="12" viewBox="0 0 11 12"><path d="M3 2.200A4.500 4.500 0 1 0 8.500 2.500" fill="none" stroke="#999" stroke-width="1.500"/><path d="M1 .5h5v5z" fill="#999"/></svg></div>
      <div class="search"><span>Search _ROBOCZY</span><svg width="12" height="12" viewBox="0 0 12 12"><circle cx="7.500" cy="4.500" r="3.500" fill="none" stroke="#999" stroke-width="1.500"/><path d="M5 7 .7 11.300" stroke="#999" stroke-width="1.900"/></svg></div>
    </div>
    <div class="xbody">
      <div class="files">
        <div class="cols"><i class="cb"></i><span class="cn">Name<svg width="8" height="4" viewBox="0 0 8 4"><path d="M.5 3.700 4 .5l3.500 3.200" fill="none" stroke="#999"/></svg></span><span class="cd">Date modified</span><span class="ct">Type</span><span class="cs">Size</span></div>
        <p>This folder is empty.</p>
      </div>
      <div class="preview">Select a file to preview.</div>
    </div>
    <footer class="status"><span>0 items</span><i></i><div class="modes"><b><svg width="16" height="13" viewBox="0 0 16 13"><path d="M0 0h5v13H0z" fill="#fff"/><path d="M2 2h1.300v1.300H2z" fill="#3b8f4a"/><path d="M2 6h1.300v1.300H2z" fill="#2d7fc8"/><path d="M2 10h1.300v1.300H2z" fill="#d33"/><path d="M6.500 2.500h4M6.500 6.500h4M6.500 10.500h4M12 2.500h4M12 6.500h4M12 10.500h4" stroke="#8e8e8e"/></svg></b><svg width="14" height="11" viewBox="0 0 14 11"><path d="M0 0h14v11H0z" fill="#fff"/><path d="M2 2h10v7H2z" fill="#5d9fd6"/><path d="M2 9V7l4-2 6 3v1z" fill="#2e5a74"/></svg></div></footer>
  </aside>
</div>
</body>
</html>
```
FILE: styles.css
```css
* { box-sizing: border-box; }
body { margin: 0; width: 1920px; height: 1080px; overflow: hidden; background: #202020; font-family: "Open Sans", "Noto Sans", sans-serif; font-size: 12px; }
svg { display: block; flex: none; }
.defs { position: absolute; width: 0; height: 0; }
i, em { font-style: normal; }
.desktop { display: flex; height: 1080px; }

/* taskbar */
.taskbar { width: 63px; display: flex; flex-direction: column; background: linear-gradient(#10121a, #121318 15%, #1a1513 25%, #111313 34%, #121212 80%, #14101a); color: #fff; border-right: 1px solid #3b3d40; }
.sys { height: 30px; display: flex; justify-content: center; align-items: center; }
.apps { margin-top: 2px; height: 697px; }
.app { height: 31px; display: flex; justify-content: center; align-items: center; }
.sys, .app { padding-right: 1px; }
.run { background: linear-gradient(#5c9cc0, #5c9cc0) 0 50% / 2px 22px no-repeat; }
.many { background: linear-gradient(90deg, #5c9cc0 1px, #5c9cc0 2px, #2b5c78 2px, #477f9c 3px) 0 50% / 4px 22px no-repeat; }
.active { background: linear-gradient(#5c9cc0, #5c9cc0) 0 50% / 2px 28px no-repeat, linear-gradient(90deg, #484848 54px, #303030 54px, #3f3f3f 56px) 0 50% / 58px 28px no-repeat; }
.dockscroll { height: 17px; background: #f0f0f0; display: flex; align-items: center; padding: 0 5px 0 5px; justify-content: space-between; }
.dockscroll i { width: 17px; height: 17px; background: #cdcdcd; margin-right: 11px; margin-left: -2px; }
.tray { flex: 1; display: flex; flex-direction: column; }
.tray > div { display: flex; align-items: center; justify-content: center; }
.people { height: 40px; }
.more { height: 16px; padding-left: 28px; }
.net { height: 28px; gap: 7px; padding-left: 4px; }
.vol { height: 24px; padding-right: 20px; }
.kbd { height: 28px; }
.lang { height: 36px; font-size: 12px; }
.tray .clock { height: 44px; flex-direction: column; line-height: 17px; letter-spacing: -.35px; padding: 14px 1px 0 0; justify-content: flex-start; white-space: nowrap; }
.note { height: 58px; }

/* browser windows */
.browsers { width: 928px; display: flex; flex-direction: column; }
.window { height: 540px; display: flex; flex-direction: column; position: relative; background: #fff; border-bottom: 1px solid #444; overflow: hidden; }
.window::after { content: ""; position: absolute; right: 0; top: 0; width: 20px; height: 540px; background: linear-gradient(90deg, transparent, rgba(0,0,0,.22)); border-right: 1px solid #222; }
.titlebar { height: 43px; flex: none; background: #9fb2bb; display: flex; border-top: 1px solid #aaa; padding-left: 8px; }
.second .titlebar { background: linear-gradient(#8497a0, #9fb2bb 10px); border-top: 0; }
.second .tab { margin-top: 9px; }
.tab { width: 240px; margin-top: 8px; background: #fff; border-radius: 8px 8px 0 0; display: flex; align-items: center; padding-left: 14px; color: #47494d; position: relative; }
.tab::before, .tab::after { content: ""; position: absolute; bottom: 0; width: 8px; height: 8px; left: -8px; background: radial-gradient(circle at 0 0, transparent 7.500px, #fff 8px); }
.tab::after { left: 240px; background: radial-gradient(circle at 100% 0, transparent 7.500px, #fff 8px); }
.doc { color: #5f6368; }
.tabname { width: 173px; margin: 0 10px 0 11px; white-space: nowrap; overflow: hidden; font-size: 12px; line-height: 16px; padding-bottom: 1px; letter-spacing: -.17px; color: transparent; background: linear-gradient(90deg, #45484d 155px, #d8d8d8 173px); background-clip: text; -webkit-background-clip: text; }
.plus { margin: 19px 0 0 16px; }
.second .plus { margin-top: 20px; }
.winctl { margin: 9px 19px 0 auto; display: flex; gap: 36px; }
.second .winctl { margin-top: 10px; }
.toolbar { height: 37px; flex: none; display: flex; align-items: center; border-bottom: 1px solid #ababab; color: #5f6368; }
.nav { display: flex; align-items: center; gap: 16px; padding-left: 14px; }
.off { color: #b6b8ba; }
.flip { transform: scaleX(-1); }
.homebg { width: 28px; height: 28px; border-radius: 14px; background: #f9f9f9; margin-left: -6px; display: flex; align-items: center; justify-content: center; }
.second .homebg { background: none; }
.omnibox { width: 406px; height: 28px; border-radius: 14px; background: #f1f3f4; margin-left: 8px; display: flex; align-items: center; padding-left: 14px; }
.url { width: 330px; margin: 0 17px 0 11px; font-size: 14px; white-space: nowrap; color: #202124; letter-spacing: -.1px; }
.url em { color: #80868b; letter-spacing: -.52px; }
.ext { display: flex; gap: 16px; margin-left: 16px; }
.ext svg { width: 16px; height: 16px; }
.sep { width: 1px; height: 16px; background: #ccc; margin: 0 12px 0 16px; }
.avatar { margin-right: 20px; }
.view { flex: 1; display: flex; min-height: 0; }
.page { width: 910px; position: relative; overflow: hidden; font-family: Roboto, sans-serif; }
.mappage { background: #fefefe; }
.rings circle { fill: rgba(255,255,255,.6); stroke: #333; stroke-width: 5.200px; }
.rings .k { stroke: #000; stroke-width: 6px; }
.labels { font-size: 30px; fill: #222; }
.labels .h { fill: #000; stroke: #000; stroke-width: .6px; }
.labels .cap { font-size: 37px; font-weight: 700; fill: #000; }
.mappage h1 { margin: 0; font-weight: 400; font-size: 22px; line-height: 27px; text-align: center; color: #111; width: 910px; }
.cookies { position: absolute; right: 100px; bottom: 0; width: 120px; height: 21px; border: 1px solid #333; border-bottom: 0; background: #fff; color: #000; font-size: 13px; line-height: 21px; text-align: center; letter-spacing: .1px; }
.vscroll { width: 17px; background: #f1f1f1; display: flex; flex-direction: column; align-items: center; padding: 6px 0; }
.thumb { width: 13px; background: #c1c1c1; }
.t1 { height: 45px; margin-top: 63px; }
.t2 { height: 45px; margin-top: 205px; }
.dn { margin-top: auto; }

/* cemetery table */
.table { width: 873px; margin: -6px 0 0 18px; }
.row { height: 32px; display: grid; grid-template-columns: 69px 92px 491px 133px 22px; align-items: start; background: #efece7; color: #3d3d3d; font-size: 14px; }
.row:nth-child(odd) { background: #e5e1de; }
.num { grid-column: 2; line-height: 22px; letter-spacing: -.1px; }
.name { line-height: 33px; }
.grob { width: 58px; height: 19px; margin-top: 5px; border: 1px solid #ccc; border-radius: 2px; background: linear-gradient(#fff, #f1f1f1); color: #6b6967; font: 700 10px/17px Lato, sans-serif; text-align: center; letter-spacing: -.35px; white-space: nowrap; }
.grob b { color: #cf3d19; }
.row svg { width: 22px; height: 22px; margin-top: 3px; }
.marks { position: absolute; left: 0; top: 0; width: 910px; height: 459px; }
.hl { mix-blend-mode: multiply; }

/* explorer */
.explorer { width: 929px; background: #202020; color: #fff; display: flex; flex-direction: column; border: 1px solid #3c6478; border-top: 0; letter-spacing: -.2px; }
.xtitle { height: 31px; background: #3c6478; display: flex; align-items: center; padding-left: 9px; }
.bar { width: 3px; height: 12px; border: solid #7b98a6; border-width: 0 1px; margin: 0 0 0 7px; }
.q1 { margin-left: 10px; }
.q2 { margin-left: 9px; }
.q3 { margin-left: 8px; }
.path { margin-left: 6px; letter-spacing: -.27px; }
.xctl { margin-left: auto; display: flex; gap: 36px; padding-right: 18px; }
.xtabs { height: 23px; background: #000; display: flex; line-height: 23px; align-items: center; }
.xtabs span { text-align: center; font-size: 12px; }
.xtabs .file { width: 56px; background: #3c6478; }
.xtabs .on { width: 58px; background: #202020; height: 24px; border: 1px solid #333; border-bottom: 0; }
.sh { width: 60px; }
.vw { width: 52px; }
.fold { margin-left: auto; }
.help { width: 16px; height: 16px; border-radius: 8px; background: #0a7bd6; border: 1px solid #bfe0f7; font-size: 11px; line-height: 14px; text-align: center; margin: 0 3px 0 9px; }
.ribbon { height: 93px; border-top: 1px solid #333; border-bottom: 1px solid #333; display: flex; }
.group { position: relative; height: 88px; margin-top: 2px; border-right: 1px solid #3d3d3d; display: flex; flex-direction: column; }
.g1 { width: 263px; } .g2 { width: 190px; } .g3 { width: 146px; } .g4 { width: 133px; } .g5 { width: 115px; }
.tools { display: flex; height: 72px; }
.glabel { text-align: center; color: #c8c8c8; line-height: 17px; }
.big { display: flex; flex-direction: column; align-items: center; text-align: center; line-height: 13px; padding-top: 4px; white-space: nowrap; }
.big span { margin-top: 6px; }
.w78 { width: 78px; } .w30 { width: 30px; } .w55 { width: 55px; } .w50 { width: 50px; } .w52 { width: 52px; } .w32 { width: 32px; } .w46 { width: 46px; } .w42 { width: 42px; } .w62 { width: 63px; }
.dim { color: #b9b9b9; }
.list { display: flex; flex-direction: column; padding-top: 2px; white-space: nowrap; letter-spacing: -.5px; }
.list div { display: flex; align-items: center; height: 22px; gap: 4px; }
.l1 { margin-left: -3px; }
.l5 { margin-left: 7px; }
.l5 div { gap: 3px; }
.l3 { margin-left: -1px; }
.l3 div, .l4 div { gap: 3px; }
u { display: inline-block; width: 0; height: 0; border: 2.500px solid transparent; border-top: 3px solid currentColor; border-bottom: 0; vertical-align: 3px; }
.list u { margin-left: 1px; }
.dim u { color: #666; }
.mini { width: 1px; height: 55px; margin: 7px 0 0 9px; background: #4a4a4a; }
.addr { height: 35px; background: #191919; display: flex; align-items: center; }
.a1 { margin-left: 12px; } .a2 { margin-left: 17px; } .a3 { margin-left: 14px; } .a4 { margin: 0 7px 0 11px; }
.crumbs { width: 595px; height: 22px; border: 1px solid #535353; display: flex; align-items: center; padding-left: 3px; white-space: nowrap; }
.crumbs i { width: 5px; height: 5px; border: solid #999; border-width: 1.500px 1.500px 0 0; transform: rotate(45deg) scale(.8); margin: 0 10px 0 7px; }
.crumbs span { flex: none; letter-spacing: -.3px; }
.c1 { width: 41px; } .c2 { width: 109px; } .c3 { width: 45px; } .c4 { width: 118px; }
.drop { margin-left: auto; }
.ref { margin: 0 2px 0 7px; }
.search { width: 202px; height: 22px; border: 1px solid #535353; margin-left: 12px; color: #6f6f6f; display: flex; align-items: center; justify-content: space-between; padding: 0 8px; }
.xbody { flex: 1; display: flex; }
.files { width: 652px; border-right: 1px solid #2d2d2d; }
.cols { display: flex; height: 25px; align-items: center; color: #dedede; line-height: 25px; }
.cb { width: 12px; height: 12px; background: #fff; margin-left: 12px; border: 1px solid #ccc; }
.cn { width: 248px; padding-left: 10px; position: relative; border-right: 1px solid #636363; }
.cn svg { position: absolute; left: 114px; top: 0; }
.cd, .ct, .cs { border-right: 1px solid #636363; padding-left: 6px; width: 120px; }
.cs { width: 80px; }
.files p { margin: 14px 0 0; text-align: center; line-height: 18px; }
.preview { flex: 1; display: flex; align-items: center; justify-content: center; letter-spacing: -.3px; }
.status { height: 23px; background: #333; display: flex; align-items: center; padding-left: 14px; letter-spacing: -.15px; }
.status i { width: 1px; height: 11px; background: #fff; margin-left: 10px; }
.modes { margin-left: auto; display: flex; align-items: center; gap: 4px; padding-right: 8px; }
.modes b { width: 22px; height: 22px; background: #666; border: 1px solid #888; display: flex; align-items: center; justify-content: center; }
```
